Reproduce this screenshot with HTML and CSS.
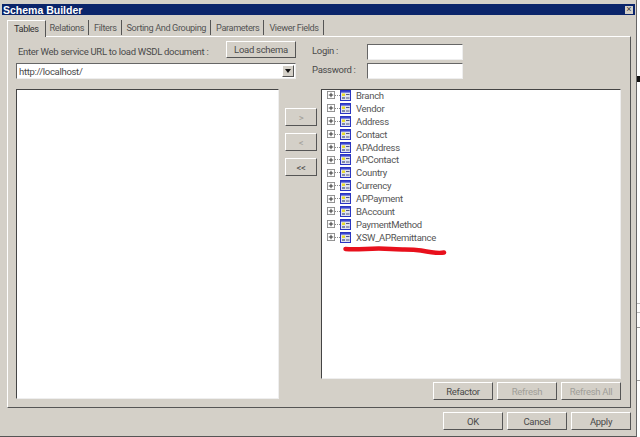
FILE: index.html
```html
<!DOCTYPE html>
<html>
<head>
<meta charset="utf-8">
<title>Schema Builder</title>
<link rel="stylesheet" href="styles.css">
</head>
<body>
<div class="window">
  <div class="titlebar"><span class="title-text">Schema Builder</span><span class="close">×</span></div>
  <div class="tabs">
    <div class="tab active">Tables</div>
    <div class="tab">Relations</div>
    <div class="tab">Filters</div>
    <div class="tab">Sorting And Grouping</div>
    <div class="tab">Parameters</div>
    <div class="tab">Viewer Fields</div>
  </div>
  <div class="panel">
    <div class="top">
      <div class="url">
        <div class="url-row">
          <span class="url-label">Enter Web service URL to load WSDL document :</span>
          <button class="btn load">Load schema</button>
        </div>
        <div class="combo"><span class="combo-text">http://localhost/</span><span class="combo-arrow"></span></div>
      </div>
      <div class="login">
        <div class="field"><span class="field-label">Login :</span><span class="input"></span></div>
        <div class="field"><span class="field-label">Password :</span><span class="input"></span></div>
      </div>
    </div>
    <div class="main">
      <div class="list left"></div>
      <div class="moves">
        <button class="btn move" disabled>&gt;</button>
        <button class="btn move" disabled>&lt;</button>
        <button class="btn move">&lt;&lt;</button>
      </div>
      <div class="right">
        <div class="list tree">
          <div class="node"><svg class="exp" viewBox="0 0 9 9"><use href="#plus"/></svg><i class="dash"></i><svg class="ico" viewBox="0 0 11 11"><use href="#tbl"/></svg><span>Branch</span></div>
          <div class="node"><svg class="exp" viewBox="0 0 9 9"><use href="#plus"/></svg><i class="dash"></i><svg class="ico" viewBox="0 0 11 11"><use href="#tbl"/></svg><span>Vendor</span></div>
          <div class="node"><svg class="exp" viewBox="0 0 9 9"><use href="#plus"/></svg><i class="dash"></i><svg class="ico" viewBox="0 0 11 11"><use href="#tbl"/></svg><span>Address</span></div>
          <div class="node"><svg class="exp" viewBox="0 0 9 9"><use href="#plus"/></svg><i class="dash"></i><svg class="ico" viewBox="0 0 11 11"><use href="#tbl"/></svg><span>Contact</span></div>
          <div class="node"><svg class="exp" viewBox="0 0 9 9"><use href="#plus"/></svg><i class="dash"></i><svg class="ico" viewBox="0 0 11 11"><use href="#tbl"/></svg><span>APAddress</span></div>
          <div class="node"><svg class="exp" viewBox="0 0 9 9"><use href="#plus"/></svg><i class="dash"></i><svg class="ico" viewBox="0 0 11 11"><use href="#tbl"/></svg><span>APContact</span></div>
          <div class="node"><svg class="exp" viewBox="0 0 9 9"><use href="#plus"/></svg><i class="dash"></i><svg class="ico" viewBox="0 0 11 11"><use href="#tbl"/></svg><span>Country</span></div>
          <div class="node"><svg class="exp" viewBox="0 0 9 9"><use href="#plus"/></svg><i class="dash"></i><svg class="ico" viewBox="0 0 11 11"><use href="#tbl"/></svg><span>Currency</span></div>
          <div class="node"><svg class="exp" viewBox="0 0 9 9"><use href="#plus"/></svg><i class="dash"></i><svg class="ico" viewBox="0 0 11 11"><use href="#tbl"/></svg><span>APPayment</span></div>
          <div class="node"><svg class="exp" viewBox="0 0 9 9"><use href="#plus"/></svg><i class="dash"></i><svg class="ico" viewBox="0 0 11 11"><use href="#tbl"/></svg><span>BAccount</span></div>
          <div class="node"><svg class="exp" viewBox="0 0 9 9"><use href="#plus"/></svg><i class="dash"></i><svg class="ico" viewBox="0 0 11 11"><use href="#tbl"/></svg><span>PaymentMethod</span></div>
          <div class="node"><svg class="exp" viewBox="0 0 9 9"><use href="#plus"/></svg><i class="dash"></i><svg class="ico" viewBox="0 0 11 11"><use href="#tbl"/></svg><span>XSW_APRemittance</span></div>
          <svg class="scribble" viewBox="0 0 106 12"><path d="M2.5 4C18 5 30 2.5 48 4C60 5 66 3.5 78 5.5C88 7.5 96 8.5 101 7.5" fill="none" stroke="#e8101c" stroke-width="4.5" stroke-linecap="round"/></svg>
        </div>
        <div class="actions">
          <button class="btn act">Refactor</button>
          <button class="btn act" disabled>Refresh</button>
          <button class="btn act" disabled>Refresh All</button>
        </div>
      </div>
    </div>
  </div>
  <div class="footer">
    <button class="btn foot">OK</button>
    <button class="btn foot">Cancel</button>
    <button class="btn foot">Apply</button>
  </div>
</div>
<div class="behind"></div>
<svg class="defs" width="0" height="0">
  <defs>
    <g id="plus"><rect x=".5" y=".5" width="8" height="8" fill="#fff" stroke="#8a8a8a"/><path d="M2 4.5H7M4.5 2V7" stroke="#222" fill="none"/></g>
    <g id="tbl"><rect x=".5" y=".5" width="10" height="10" fill="#dfe3f2" stroke="#2a35c0"/><rect x="1" y="1" width="9" height="1.6" fill="#3b47d0"/><rect x="2" y="3.5" width="3" height="2.5" fill="#e8dc30"/><rect x="2" y="7" width="3" height="2" fill="#8088a8"/><path d="M6 4.5H9.5M6 8H9.5" stroke="#555a80" fill="none"/></g>
  </defs>
</svg>
</body>
</html>
```
FILE: styles.css
```css
* { box-sizing: border-box; }
html, body { margin: 0; padding: 0; }
body {
  width: 640px; height: 437px; overflow: hidden; background: #fff; display: flex;
  font-family: Roboto, "Liberation Sans", Arial, sans-serif; font-size: 9.5px; letter-spacing: -0.3px; color: #4a4a4a;
}
.window {
  width: 637px; height: 437px; flex: none; background: #d4d0c8; padding: 4px 1px 0 2px;
  border-right: 1px solid #666; border-bottom: 1px solid #555;
  display: flex; flex-direction: column;
}
.behind {
  flex: 1;
  background:
    linear-gradient(#111, #111) 0 76px / 100% 6px no-repeat,
    linear-gradient(#bbb, #bbb) 0 303px / 100% 1px no-repeat,
    linear-gradient(#bbb, #bbb) 0 312px / 100% 1px no-repeat,
    linear-gradient(#999, #999) 0 327px / 100% 1px no-repeat,
    linear-gradient(#999, #999) 0 380px / 100% 1px no-repeat,
    #fff;
}
.titlebar {
  height: 11px; background: #0a246a; color: #fff; font-weight: bold; font-size: 10.5px; letter-spacing: 0;
  font-family: "Liberation Sans", Arial, sans-serif;
  display: flex; justify-content: space-between; align-items: center; padding: 0 2px 0 1px; line-height: 11px;
}
.title-text { padding-top: 1px; }
.close {
  width: 8px; height: 8px; background: #d4d0c8; color: #333; font-size: 9px; line-height: 7px;
  text-align: center; font-weight: normal;
}
.tabs { display: flex; padding: 0 0 0 5px; height: 21px; align-items: flex-end; font-size: 9.2px; letter-spacing: -0.4px; }
.tab {
  height: 15px; line-height: 16px; padding: 0 4px 0 3px; color: #555; white-space: nowrap; margin-bottom: 1px;
  border-right: 1px solid #555; margin-right: 2px;
}
.tab.active {
  height: 17px; color: #333; padding: 0 6px 0 6px; line-height: 15px; margin: 0 1px -1px 0;
  border-top: 1px solid #fff; border-left: 1px solid #fff; position: relative; z-index: 1; background: #d4d0c8;
}
.panel {
  margin: 0 4px 0 5px; height: 372px; padding: 4px 8px 0 8px;
  border-top: 1px solid #fff; border-left: 1px solid #fff;
  border-right: 1px solid #555; border-bottom: 1px solid #555;
  display: flex; flex-direction: column;
}
.top { display: flex; height: 48px; }
.url { width: 280px; flex: none; }
.url-row { display: flex; justify-content: space-between; align-items: center; height: 17px; margin-bottom: 5px; }
.url-label { padding: 3px 0 0 2px; white-space: nowrap; }
.btn {
  font: inherit; letter-spacing: inherit; color: #4a4a4a; background: #d4d0c8; padding: 0;
  border: 1px solid; border-color: #fff #555 #555 #fff;
}
.btn:disabled { color: #a09e98; }
.load { width: 70px; height: 17px; flex: none; }
.combo {
  height: 16px; background: #fff; display: flex; align-items: center; justify-content: space-between;
  border: 1px solid; border-color: #666 #eee #eee #666; padding: 0 1px 0 2px;
}
.combo-arrow {
  width: 12px; height: 12px; background: #d4d0c8;
  border: 1px solid; border-color: #fff #555 #555 #fff;
  display: flex; align-items: center; justify-content: center;
}
.combo-arrow::after {
  content: ""; border: 3px solid transparent; border-top: 4px solid #111; border-bottom: 0;
}
.login { margin-left: 16px; padding-top: 3px; }
.field { display: flex; align-items: center; height: 16px; margin-bottom: 3px; }
.field-label { width: 55px; padding-bottom: 4px; }
.input {
  width: 96px; height: 16px; background: #fff;
  border: 1px solid; border-color: #666 #eee #eee #666;
}
.main { display: flex; flex: 1; }
.list { background: #fff; border: 1px solid; border-color: #444 #eee #eee #444; }
.left { width: 263px; height: 310px; flex: none; }
.moves { width: 42px; flex: none; padding: 19px 4px 0 6px; display: flex; flex-direction: column; gap: 7px; }
.move { height: 18px; width: 32px; }
.right { width: 300px; flex: none; display: flex; flex-direction: column; }
.tree { height: 290px; padding: 0 0 0 5px; }
.node { height: 12.9px; display: flex; align-items: center; }
.node:first-child { margin-top: -1px; }
.exp { width: 8px; height: 8px; flex: none; }
.dash { width: 5px; border-top: 1px dotted #888; flex: none; }
.ico { width: 11px; height: 11px; flex: none; margin-right: 5px; }
.node span { color: #555; }
.scribble { display: block; width: 106px; height: 12px; margin: 1px 0 0 16px; }
.actions { display: flex; justify-content: flex-end; gap: 4px; padding: 3px 0 0 0; }
.act { width: 60px; height: 18px; }
.footer { display: flex; justify-content: flex-end; gap: 4px; padding: 4px 4px 0 0; }
.foot { width: 60px; height: 18px; }
.defs { position: absolute; }
```
